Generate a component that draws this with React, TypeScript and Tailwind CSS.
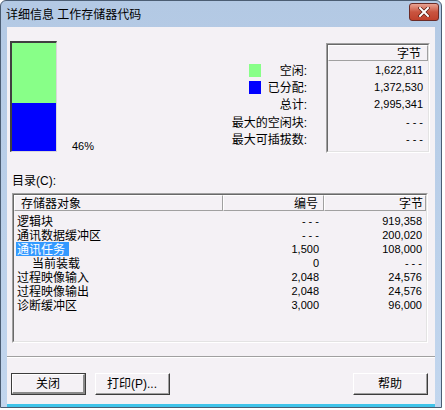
import React from "react";

const F = "font-['Liberation_Sans','Noto_Sans_CJK_SC',sans-serif]";

function Sunken({ className = "", children }: { className?: string; children?: React.ReactNode }) {
  return (
    <div className={`border-t border-l border-t-[#a0a0a0] border-l-[#a0a0a0] border-r border-b border-r-white border-b-white ${className}`}>
      <div className="w-full h-full border-t border-l border-t-[#696969] border-l-[#696969] border-r border-b border-r-[#e3e3e3] border-b-[#e3e3e3] bg-[#f4f1f5] overflow-hidden flex flex-col">
        {children}
      </div>
    </div>
  );
}

function HeaderCell({ className = "", children }: { className?: string; children?: React.ReactNode }) {
  return (
    <div className={`h-[16px] pt-[2px] border-t border-l border-white border-r border-b border-r-[#a0a0a0] border-b-[#a0a0a0] flex items-center text-[12px] leading-none ${className}`}>
      {children}
    </div>
  );
}

function Btn({ label, def = false, className = "" }: { label: string; def?: boolean; className?: string }) {
  return (
    <div className={`h-[22px] ${def ? "border border-[#3c3c3c]" : "border-t border-l border-t-white border-l-white border-r border-b border-r-[#3c3c3c] border-b-[#3c3c3c]"} ${className}`}>
      <div className={`w-full h-full pt-[1px] ${def ? "border-t border-l border-t-white border-l-white border-r-2 border-b-2 border-r-[#8a8a8a] border-b-[#8a8a8a]" : "border-r border-b border-r-[#a0a0a0] border-b-[#a0a0a0]"} bg-[#f4f1f5] flex items-center justify-center text-[12px] leading-none text-black`}>
        {label}
      </div>
    </div>
  );
}

const rows: { name: string; num: string; bytes: string; indent?: boolean; sel?: boolean }[] = [
  { name: "逻辑块", num: "- - -", bytes: "919,358" },
  { name: "通讯数据缓冲区", num: "- - -", bytes: "200,020" },
  { name: "通讯任务", num: "1,500", bytes: "108,000", sel: true },
  { name: "当前装载", num: "0", bytes: "- - -", indent: true },
  { name: "过程映像输入", num: "2,048", bytes: "24,576" },
  { name: "过程映像输出", num: "2,048", bytes: "24,576" },
  { name: "诊断缓冲区", num: "3,000", bytes: "96,000" },
];

export default function App() {
  return (
    <div className={`w-[445px] h-[410px] bg-white ${F} text-black`}>
      <div className="w-[442px] h-[408px] border border-[#4b5d73] rounded-t-[6px] bg-gradient-to-b from-[#b3c9e4] to-[#c2d6ee] flex flex-col overflow-hidden">
        {/* title bar */}
        <div className="h-[26px] flex items-center justify-between pl-[5px] pr-[2px] shrink-0">
          <span className="text-[12px] leading-none text-black pt-[1px]">详细信息 工作存储器代码</span>
          <div className="w-[30px] h-[18px] mb-[4px] rounded-[3px] border border-[#6b2b26] bg-gradient-to-b from-[#e8a293] via-[#c9543f] to-[#c0412c] flex items-center justify-center">
            <svg width="12" height="10" viewBox="0 0 12 10">
              <path d="M2 1 L10 9 M10 1 L2 9" stroke="#5a1a10" strokeWidth="3.4" strokeLinecap="square" />
              <path d="M2 1 L10 9 M10 1 L2 9" stroke="white" strokeWidth="2" strokeLinecap="square" />
            </svg>
          </div>
        </div>
        {/* body */}
        <div className="flex-1 mx-[6px] bg-[#f4f1f5] border-b-[3px] border-b-[#40c4ea] flex flex-col">
          {/* top section */}
          <div className="flex mt-[14px] ml-[3px] h-[112px]">
            <div className="w-[47px] h-[111px] border-t-2 border-l-2 border-t-[#404040] border-l-[#404040] border-r border-b border-r-[#d8d8d8] border-b-[#d8d8d8] flex flex-col">
              <div className="h-[60px] bg-[#88ff88]" />
              <div className="flex-1 bg-[#0000ff]" />
            </div>
            <div className="ml-[15px] self-end mb-[1px] text-[11px] leading-[12px]">46%</div>
            <div className="ml-[135px] mt-[21px] flex flex-col items-end w-[78px]">
              <div className="h-[17px] w-full flex items-center">
                <div className="ml-[20px] w-[12px] h-[13px] bg-[#88ff88]" />
                <span className="ml-auto text-[12px] leading-none pt-[1px]">空闲:</span>
              </div>
              <div className="h-[17px] w-full flex items-center">
                <div className="ml-[20px] w-[12px] h-[13px] bg-[#0000ff]" />
                <span className="ml-auto text-[12px] leading-none pt-[1px]">已分配:</span>
              </div>
              <div className="h-[17px] w-full flex items-center justify-end">
                <span className="text-[12px] leading-none pt-[1px]">总计:</span>
              </div>
              <div className="h-[18px] w-full flex items-center justify-end">
                <span className="text-[12px] leading-none pt-[1px]">最大的空闲块:</span>
              </div>
              <div className="h-[17px] w-full flex items-center justify-end">
                <span className="text-[12px] leading-none pt-[1px]">最大可插拔数:</span>
              </div>
            </div>
            <div className="ml-[19px] mt-[2px]">
              <Sunken className="w-[104px] h-[110px]">
                <HeaderCell className="w-[100px] justify-end pr-[6px]">字节</HeaderCell>
                <div className="flex flex-col items-end pr-[5px] pt-[1px] text-[11px]">
                  <div className="h-[17px] flex items-center">1,622,811</div>
                  <div className="h-[17px] flex items-center">1,372,530</div>
                  <div className="h-[17px] flex items-center">2,995,341</div>
                  <div className="h-[18px] flex items-center">- - -</div>
                  <div className="h-[17px] flex items-center">- - -</div>
                </div>
              </Sunken>
            </div>
          </div>
          {/* directory label */}
          <div className="ml-[5px] mt-[22px] text-[12px] leading-none">目录(C):</div>
          <div className="ml-[5px] mt-[6px]">
            <Sunken className="w-[416px] h-[150px]">
              <div className="flex">
                <HeaderCell className="w-[209px] pl-[6px]">存储器对象</HeaderCell>
                <HeaderCell className="w-[101px] justify-end pr-[5px]">编号</HeaderCell>
                <HeaderCell className="w-[102px] justify-end pr-[2px]">字节</HeaderCell>
              </div>
              <div className="flex flex-col pt-[3px]">
                {rows.map((r) => (
                  <div key={r.name} className="h-[14px] flex items-center text-[12px] leading-none">
                    <div className="w-[209px] pl-[2px] flex items-center h-full">
                      <span
                        className={`h-[14px] pt-[1px] flex items-center ${r.indent ? "ml-[15px]" : ""} ${r.sel ? "bg-[#3399ff] text-white pl-[1px] pr-[4px]" : "pl-[1px]"}`}
                      >
                        {r.name}
                      </span>
                    </div>
                    <div className="w-[101px] text-right pr-[5px] text-[11px]">{r.num}</div>
                    <div className="w-[102px] text-right pr-[4px] text-[11px]">{r.bytes}</div>
                  </div>
                ))}
              </div>
            </Sunken>
          </div>
          {/* separator */}
          <div className="mt-[13px] h-[2px] border-t border-t-[#a0a0a0] border-b border-b-white" />
          {/* buttons */}
          <div className="flex mt-[15px] ml-[4px]">
            <Btn label="关闭" def className="w-[75px]" />
            <Btn label="打印(P)..." className="w-[75px] ml-[9px]" />
            <Btn label="帮助" className="w-[75px] ml-auto mr-[7px]" />
          </div>
        </div>
      </div>
    </div>
  );
}
